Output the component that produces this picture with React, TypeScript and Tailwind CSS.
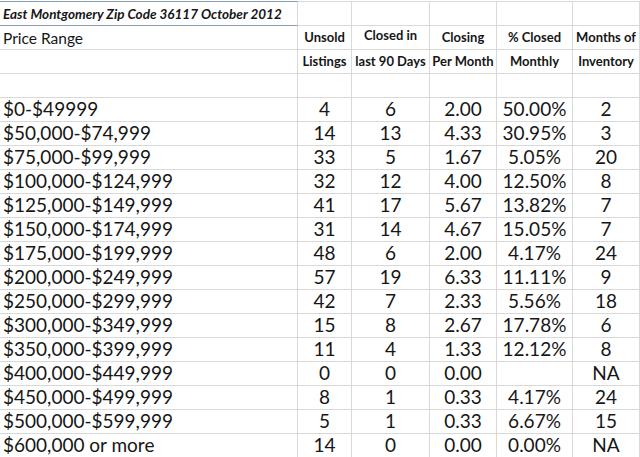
const rows: [string, string, string, string, string, string][] = [
  ["$0-$49999", "4", "6", "2.00", "50.00%", "2"],
  ["$50,000-$74,999", "14", "13", "4.33", "30.95%", "3"],
  ["$75,000-$99,999", "33", "5", "1.67", "5.05%", "20"],
  ["$100,000-$124,999", "32", "12", "4.00", "12.50%", "8"],
  ["$125,000-$149,999", "41", "17", "5.67", "13.82%", "7"],
  ["$150,000-$174,999", "31", "14", "4.67", "15.05%", "7"],
  ["$175,000-$199,999", "48", "6", "2.00", "4.17%", "24"],
  ["$200,000-$249,999", "57", "19", "6.33", "11.11%", "9"],
  ["$250,000-$299,999", "42", "7", "2.33", "5.56%", "18"],
  ["$300,000-$349,999", "15", "8", "2.67", "17.78%", "6"],
  ["$350,000-$399,999", "11", "4", "1.33", "12.12%", "8"],
  ["$400,000-$449,999", "0", "0", "0.00", "", "NA"],
  ["$450,000-$499,999", "8", "1", "0.33", "4.17%", "24"],
  ["$500,000-$599,999", "5", "1", "0.33", "6.67%", "15"],
  ["$600,000 or more", "14", "0", "0.00", "0.00%", "NA"],
];

const heads = [
  ["Unsold", "Listings"],
  ["Closed in", "last 90 Days"],
  ["Closing", "Per Month"],
  ["% Closed", "Monthly"],
  ["Months of", "Inventory"],
];

const cols = "grid grid-cols-[298px_54px_78px_67px_76px_67px]";
const cell = "h-[24px] border-b border-r border-[#d9d9d9] flex items-center";
const head = `${cell} justify-center text-[13px] font-bold whitespace-nowrap`;

export default function App() {
  return (
    <div
      className="w-[640px] h-[457px] overflow-hidden bg-white pt-[1px] text-[#161616]"
      style={{ fontFamily: "Lato, 'Liberation Sans', sans-serif" }}
    >
      <div className={`${cols} border-t border-[#d9d9d9]`}>
        {/* title row */}
        <div className="-mt-px h-[25px] border-t border-b border-r border-t-[#8a9cb4] border-b-[#8a9cb4] border-r-[#d9d9d9] flex items-center pl-[3px] pt-px text-[13.5px] font-bold italic">
          East Montgomery Zip Code 36117 October 2012
        </div>
        {heads.map((_, i) => (
          <div key={i} className={cell}></div>
        ))}

        {/* header rows */}
        <div className={`${cell} pl-[3px] pt-[2px] text-[15.5px]`}>Price Range</div>
        {heads.map((h, i) => (
          <div key={i} className={`${head} ${i === 1 ? "pb-[3px]" : "pt-px"}`}>
            {h[0]}
          </div>
        ))}

        <div className={cell}></div>
        {heads.map((h, i) => (
          <div key={i} className={`${head} pt-px`}>
            {h[1]}
          </div>
        ))}

        {Array.from({ length: 6 }).map((_, i) => (
          <div key={i} className={cell}></div>
        ))}

        {/* data */}
        {rows.map((r, i) =>
          r.map((v, j) => (
            <div
              key={`${i}-${j}`}
              className={`${cell} text-[19px] ${j === 0 ? "pl-[3px]" : "justify-center"}`}
            >
              {v}
            </div>
          ))
        )}
      </div>
    </div>
  );
}
